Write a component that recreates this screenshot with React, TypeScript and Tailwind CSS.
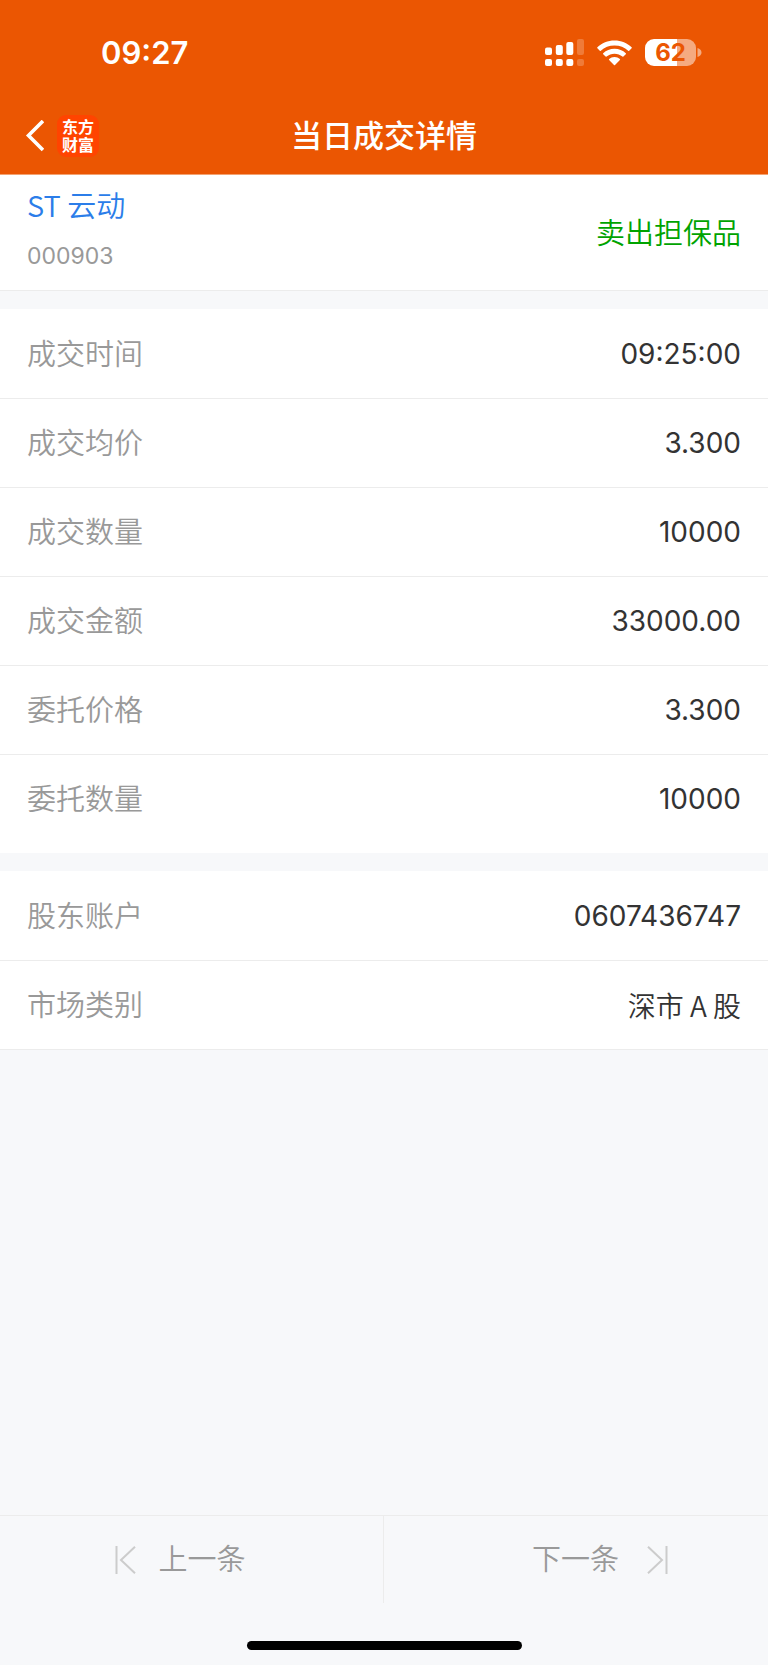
type Field = { label: string; value: string; text?: boolean };

const trade: Field[] = [
  { label: "成交时间", value: "09:25:00" },
  { label: "成交均价", value: "3.300" },
  { label: "成交数量", value: "10000" },
  { label: "成交金额", value: "33000.00" },
  { label: "委托价格", value: "3.300" },
  { label: "委托数量", value: "10000" },
];

const account: Field[] = [
  { label: "股东账户", value: "0607436747" },
  { label: "市场类别", value: "深市 A 股", text: true },
];

function Signal() {
  return (
    <svg width="39" height="27" viewBox="0 0 39 27" fill="white" aria-hidden="true">
      <rect x="0" y="8.5" width="7" height="7.5" rx="2" />
      <rect x="10.8" y="6" width="7" height="10" rx="2" />
      <rect x="21.3" y="3" width="7" height="13" rx="2" />
      <rect x="32" y="0" width="7" height="16" rx="2" opacity="0.22" />
      <rect x="0" y="20" width="7" height="7" rx="2" />
      <rect x="10.8" y="20" width="7" height="7" rx="2" />
      <rect x="21.3" y="20" width="7" height="7" rx="2" />
      <rect x="32" y="20" width="7" height="7" rx="2" opacity="0.22" />
    </svg>
  );
}

function Wifi() {
  return (
    <svg width="35" height="26" viewBox="0 0 35 26" fill="white" aria-hidden="true">
      <path d="M17.5 0.5C24.2 0.5 30.2 3.1 34.6 7.3Q35.1 7.8 34.6 8.3L32.2 10.7Q31.7 11.2 31.2 10.7C27.6 7.4 22.8 5.5 17.5 5.5S7.4 7.4 3.8 10.7Q3.3 11.2 2.8 10.7L0.4 8.3Q-0.1 7.8 0.4 7.3C4.8 3.1 10.8 0.5 17.5 0.5Z" />
      <path d="M17.5 8.8C21.9 8.8 25.9 10.5 28.8 13.2Q29.3 13.7 28.8 14.2L26.4 16.5Q25.9 17 25.4 16.6C23.3 14.8 20.5 13.7 17.5 13.7S11.7 14.8 9.6 16.6Q9.1 17 8.6 16.5L6.2 14.2Q5.7 13.7 6.2 13.2C9.1 10.5 13.1 8.8 17.5 8.8Z" />
      <path d="M17.5 17C19.6 17 21.5 17.8 22.9 19Q23.4 19.5 22.9 20L18 24.9Q17.5 25.4 17 24.9L12.1 20Q11.6 19.5 12.1 19C13.5 17.8 15.4 17 17.5 17Z" />
    </svg>
  );
}

function Battery() {
  return (
    <div className="flex items-center gap-px">
      <div className="flex h-[27px] w-[51px] items-center justify-center rounded-[9px] bg-linear-to-r from-white from-63% to-white/50 to-63% text-[24px] leading-none font-bold text-[#eb5602]">
        62
      </div>
      <svg width="5" height="9" viewBox="0 0 5 9" aria-hidden="true">
        <path d="M0.5 0C3 0.8 4.5 2.3 4.5 4.5S3 8.2 0.5 9Z" fill="white" opacity="0.5" />
      </svg>
    </div>
  );
}

function Fields({ items }: { items: Field[] }) {
  return (
    <dl>
      {items.map((f) => (
        <div
          key={f.label}
          className="flex h-[89px] items-center justify-between border-b border-[#ececec] px-[27px] in-[.open-end]:last:border-transparent"
        >
          <dt className="pt-0.5 text-[29px] font-[350] text-[#999999]">{f.label}</dt>
          <dd
            className={
              f.text
                ? "font-['Noto_Sans_CJK_SC',sans-serif] text-[28px] leading-10 font-[350] text-[#333333]"
                : "text-[28px] leading-10 text-[#333333]"
            }
          >
            {f.value}
          </dd>
        </div>
      ))}
    </dl>
  );
}

export default function App() {
  return (
    <div className="flex min-h-screen flex-col bg-[#f7f8fa] font-[Inter,'Noto_Sans_CJK_SC',sans-serif]">
      <header className="border-b border-[#f3a271] bg-[#eb5602] pb-2 text-white">
        <div className="flex h-[105px] items-center justify-between pr-[66px] pl-[101px]">
          <time className="text-[31px] leading-none font-semibold">09:27</time>
          <div className="flex items-center gap-[13px]">
            <Signal />
            <Wifi />
            <Battery />
          </div>
        </div>
        <div className="grid h-[61px] grid-cols-[1fr_auto_1fr] items-center px-[25px]">
          <div className="flex items-center gap-[13px]">
            <button type="button" aria-label="返回">
              <svg width="19" height="32" viewBox="0 0 19 32" fill="none" aria-hidden="true">
                <path d="M18 1L3.5 15.5L18 30" stroke="white" strokeWidth="3.6" />
              </svg>
            </button>
            <div className="flex size-[42px] flex-col items-center justify-center rounded-[9px] bg-[#ff4400] text-[16px] leading-[18px] font-bold">
              <span>东方</span>
              <span>财富</span>
            </div>
          </div>
          <h1 className="text-[31px] leading-10 font-medium">当日成交详情</h1>
        </div>
      </header>

      <main>
        <section className="flex items-center justify-between border-b border-[#ececec] bg-white px-[27px]">
          <div className="pt-[9px] pb-[18px]">
            <a
              href="#stock"
              className="block font-['Noto_Sans_CJK_SC',sans-serif] text-[29px] leading-10 font-[350] text-[#2b7de9]"
            >
              ST 云动
            </a>
            <p className="mt-4 text-[23px] leading-8 text-[#999999]">000903</p>
          </div>
          <p className="pt-0.5 text-[29px] leading-10 font-[350] text-[#00a300]">卖出担保品</p>
        </section>
        <section className="open-end mt-[18px] bg-white pt-px pb-[9px]">
          <Fields items={trade} />
        </section>
        <section className="mt-[18px] bg-white pt-px">
          <Fields items={account} />
        </section>
      </main>

      <footer className="mt-auto pb-[15px]">
        <nav className="grid h-[88px] grid-cols-2 border-t border-[#ececec] text-[29px] font-[350] text-[#999999]">
          <button
            type="button"
            className="flex items-center justify-center gap-[22px] border-r border-[#ececec] pr-[22px]"
          >
            <svg width="21" height="28" viewBox="0 0 21 28" fill="none" stroke="#cccccc" strokeWidth="2" aria-hidden="true">
              <path d="M1.5 0V28M20 0.8L6 14L20 27.2" />
            </svg>
            上一条
          </button>
          <button type="button" className="flex items-center justify-center gap-7 pl-12">
            下一条
            <svg width="21" height="28" viewBox="0 0 21 28" fill="none" stroke="#cccccc" strokeWidth="2" aria-hidden="true">
              <path d="M19.5 0V28M1 0.8L15 14L1 27.2" />
            </svg>
          </button>
        </nav>
        <div className="mx-auto mt-[38px] h-[9px] w-[275px] rounded-full bg-black" />
      </footer>
    </div>
  );
}
